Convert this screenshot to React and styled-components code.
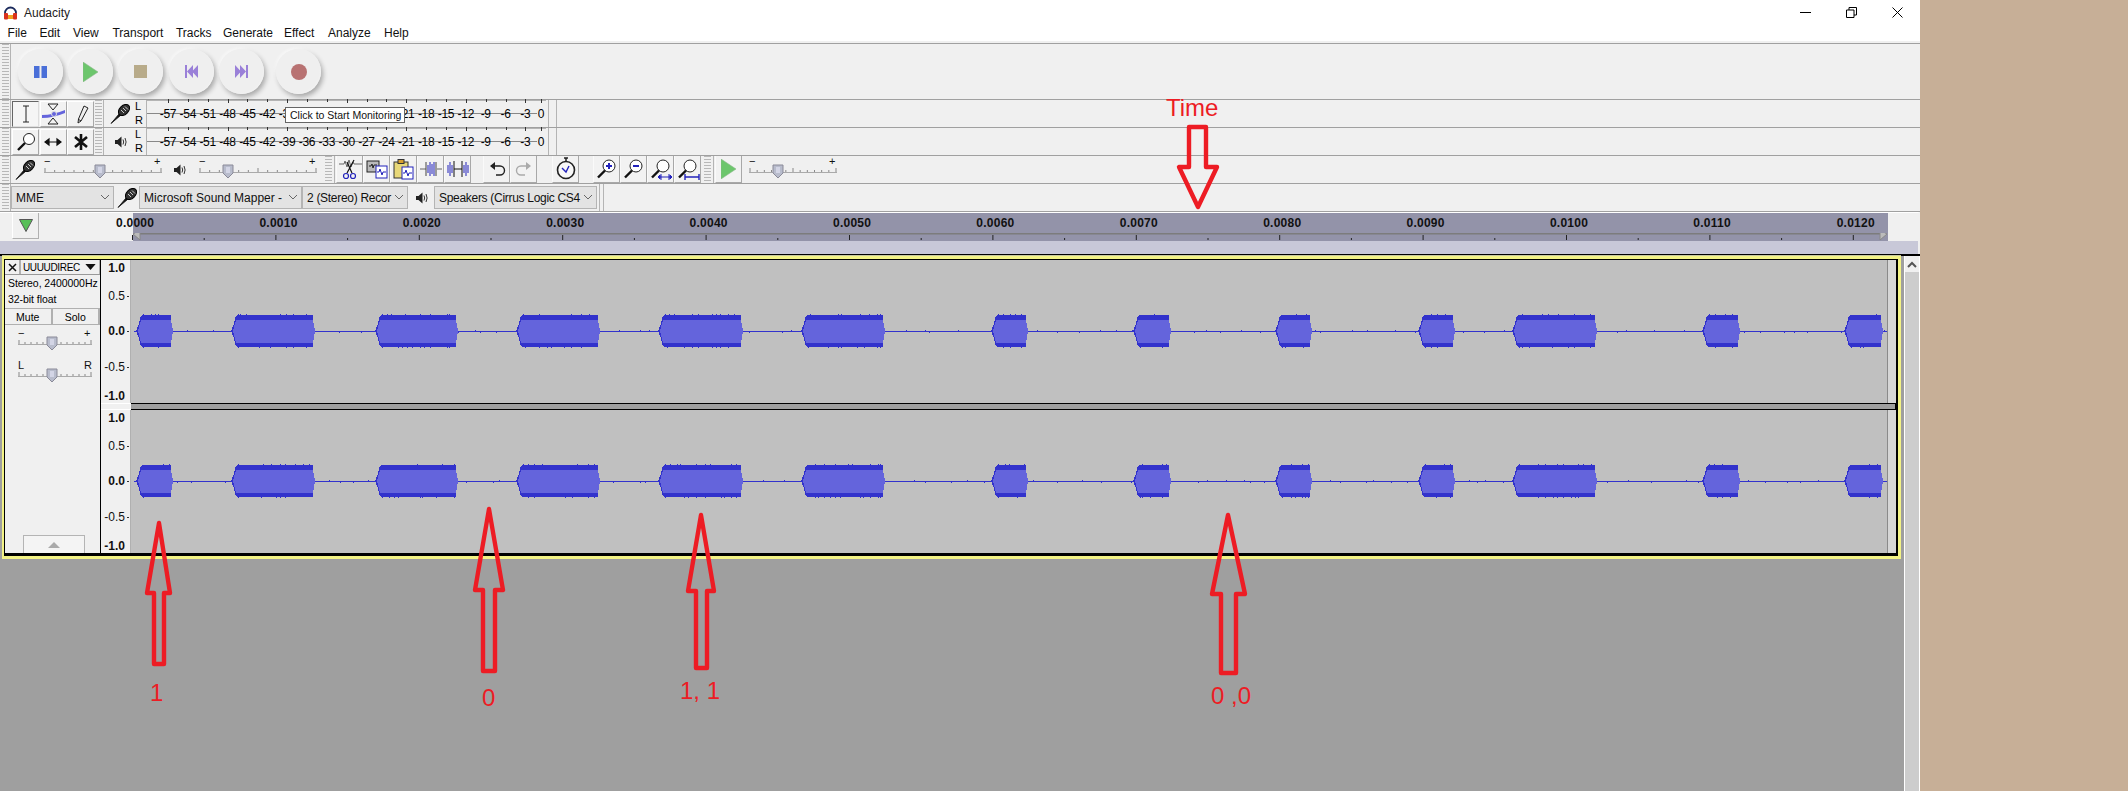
import React, { useMemo } from "react";
import styled, { createGlobalStyle } from "styled-components";

const Global = createGlobalStyle`
  html, body { margin: 0; padding: 0; background: #fff; }
  body { font-family: "Liberation Sans", Arial, sans-serif; color: #000; width: 2128px; height: 799px; overflow: hidden; }
  * { box-sizing: border-box; }
`;

const Page = styled.div`position: relative; width: 2128px; height: 799px; background: #fff;`;
const Screen = styled.div`display: flex; height: 791px;`;
const Desktop = styled.div`width: 208px; background: #c7af97;`;
const AppWindow = styled.div`width: 1920px; display: flex; flex-direction: column; background: #fff;`;

const TitleBar = styled.div`height: 25px; display: flex; align-items: center; padding-left: 3px; font-size: 12px; color: #222; flex: none;`;
const TitleText = styled.span`margin-left: 6px;`;
const WinControls = styled.div`margin-left: auto; display: flex; align-items: center;`;
const WinButton = styled.div`width: 46px; height: 25px; display: flex; align-items: center; justify-content: center;`;

const MenuBar = styled.div`height: 16px; display: flex; align-items: center; font-size: 12px; padding-left: 7.6px; color: #111; flex: none;`;
const MenuItem = styled.span`width: ${p => p.$w}px; flex: none;`;

const TopEdge = styled.div`height: 3px; background: #f0f0f0; border-bottom: 1px solid #a0a0a0; flex: none;`;
const ToolRow = styled.div`
  height: ${p => p.$h || 28}px; display: flex; align-items: stretch; background: #f0f0f0;
  border-bottom: 1px solid #a0a0a0; flex: none; position: relative;
`;
const Grip = styled.div`
  width: ${p => p.$w || 9}px; margin-left: ${p => p.$ml ?? 2}px; flex: none; border-right: 1px solid #b4b4b4;
  background: repeating-linear-gradient(to bottom, #b8b8b8 0, #b8b8b8 1px, transparent 1px, transparent 3px) 0 0 / 7px 100% no-repeat;
`;
const Slot = styled.div`display: flex; align-items: center; justify-content: center; flex: none; margin-left: ${p => p.$ml || 0}px; width: ${p => p.$w}px;`;

const TransportButtons = styled.div`display: flex; align-items: center;`;
const RoundButton = styled.div`
  width: 45px; height: 45px; border-radius: 50%; margin-left: ${p => p.$ml}px; display: flex; align-items: center; justify-content: center;
  background: radial-gradient(circle at 46% 46%, #efefef 0, #efefef 66%, #f6f6f6 82%, #e6e6e6 100%);
  box-shadow: 2px 3px 5px rgba(0,0,0,.3), -1px -1px 3px rgba(255,255,255,.8);
`;

const ToolButton = styled.div`
  width: 27px; margin: 1px 0 0 ${p => p.$ml ?? 1}px; display: flex; align-items: center; justify-content: center; flex: none;
  border-right: 1px solid #a8a8a8; border-bottom: 1px solid #a8a8a8; background: #f2f2f2;
  ${p => p.$on ? "border-left: 1px solid #666; border-top: 1px solid #666; background:#f5f5f5; border-right-color:#ddd; border-bottom-color:#ddd;" : "border-left: 1px solid #fff; border-top: 1px solid #fff;"}
`;
const LR = styled.div`width: 9px; margin-left: 4px; font-size: 11px; line-height: 13.5px; flex: none;`;
const Meter = styled.div`
  width: 400px; margin-left: 2px; flex: none; display: flex; align-items: center; padding-left: 11px; font-size: 12px;
  border: 1px solid #b4b4b4; border-right: none; border-bottom: none; letter-spacing: -.3px;
  background: linear-gradient(to bottom, transparent 12px, #888 12px, #888 13px, transparent 13px) 0 0 / 390px 100% no-repeat;
`;
const MeterCell = styled.span`
  position: relative; width: ${p => p.$w}px; text-align: center; flex: none;
  &::before { content: ""; position: absolute; top: -8px; left: 50%; width: 1px; height: ${p => p.$tall ? 4 : 3}px; background: #333; }
`;
const MeterEnd = styled.div`width: 9px; margin-left: 2px; flex: none; border-left: 1px solid #b4b4b4; border-right: 1px solid #b4b4b4;`;

const RowButton = styled.div`
  width: ${p => p.$w || 27}px; margin-left: ${p => p.$ml || 0}px; flex: none; display: flex; align-items: center; justify-content: center;
  background: #f2f2f2; border-right: 1px solid #a8a8a8; border-bottom: 1px solid #a8a8a8; border-left: 1px solid #fafafa;
`;

const Combo = styled.div`
  width: ${p => p.$w}px; margin: 2px 0 2px ${p => p.$ml || 0}px; flex: none; display: flex; align-items: center;
  background: #e3e3e3; border: 1px solid #b4b4b4; font-size: 12px; letter-spacing: ${p => p.$ls || 0}px; padding-left: 4px; color: #111;
`;
const ComboText = styled.span`flex: 1; min-width: 0; white-space: nowrap;`;
const Chevron = styled.svg`width: 15px; height: 8px; flex: none;`;
const VDivider = styled.div`width: 5px; margin-left: ${p => p.$ml}px; flex: none; border-left: 1px solid #b4b4b4; border-right: 1px solid #b4b4b4;`;

const RulerZone = styled.div`flex: none; height: 42px; border-top: 1px solid #fff; background: #c8c8d8; border-right: 2px solid #f0f0f0;`;
const RulerTop = styled.div`
  height: 28px; display: flex;
  background: linear-gradient(to right, #f0f0f0 133px, #9393a9 133px, #9393a9 1888px, #f0f0f0 1888px);
`;
const PlayMark = styled.div`
  width: 27px; height: 26px; margin-left: 12px; display: flex; align-items: center; justify-content: center;
  border-right: 1px solid #b0b0b0; border-bottom: 1px solid #b0b0b0; border-left: 1px solid #fff; flex: none;
`;
const RulerScale = styled.div`flex: 1; display: flex; flex-direction: column; min-width: 0;`;
const RulerLabels = styled.div`height: 20px; display: flex; align-items: center; padding-left: 77px; font-size: 12px; font-weight: bold; letter-spacing: .25px; color: #111;`;
const RulerLabel = styled.span`width: 143.4px; flex: none;`;

const TrackArea = styled.div`flex: 1; display: flex; background: #9f9f9f; border-top: 2px solid #000; min-height: 0;`;
const TrackWell = styled.div`width: 1904px; flex: none; padding: 0 0 0 2px;`;
const TrackFrame = styled.div`
  width: 1899px; margin-top: 0; border: 3px solid #f3f386; border-left-width: 2px;
  box-shadow: 0 -1px 0 #c8c8a0;
`;
const TrackBody = styled.div`
  height: 297px; display: flex; background: #f0f0f0; border-style: solid; border-color: #000; border-width: 1px 3px 3px 1px;
`;
const Panel = styled.div`width: 96px; flex: none; display: flex; flex-direction: column; border-right: 1px solid #000; font-size: 10.5px; height: 293px;`;
const PanelTitle = styled.div`height: 15px; display: flex; border-bottom: 1px solid #999; flex: none;`;
const CloseBox = styled.div`width: 16px; display: flex; align-items: center; justify-content: center; border-right: 2px solid #b0b0b0; flex: none;`;
const TitleDrop = styled.div`flex: 1; display: flex; align-items: center; padding-left: 2px; border-right: 1px solid #b0b0b0; font-size: 10px; letter-spacing: -.35px; white-space: nowrap;`;
const DropTriangle = styled.svg`margin-left: 5px; width: 11px; height: 6px; flex: none;`;
const InfoLine = styled.div`height: 16px; padding-left: 3px; line-height: 16px; white-space: nowrap; flex: none; letter-spacing: -.05px;`;
const MuteSolo = styled.div`height: 17px; display: flex; margin-top: 1px; flex: none; border-top: 1px solid #b0b0b0; border-bottom: 1px solid #b0b0b0;`;
const MSButton = styled.div`flex: 1; display: flex; align-items: center; justify-content: center; border-right: 2px solid #b0b0b0;`;
const SliderBlock = styled.div`width: 74px; margin: ${p => p.$mt}px 0 0 13px; flex: none;`;
const CollapseButton = styled.div`
  width: 62px; height: 18px; margin: auto 0 0 18px; border: 1px solid #b4b4b4; border-bottom: none; background: #f4f4f4;
  display: flex; align-items: center; justify-content: center;
`;

const Channels = styled.div`flex: 1; display: flex; flex-direction: column; min-width: 0; height: 293px;`;
const Channel = styled.div`height: ${p => p.$h}px; display: flex; flex: none;`;
const Sep = styled.div`height: 7px; display: flex; flex: none;`;
const SepRuler = styled.div`width: 30px; background: #f0f0f0; border-top: 1px solid #fff; border-bottom: 1px solid #fff; flex: none;`;
const SepBar = styled.div`flex: 1; background: #9f9f9f; border-top: 1px solid #000; border-bottom: 1px solid #000;`;
const VRuler = styled.div`width: 30px; flex: none; display: flex; flex-direction: column; border-right: 1px solid #b0b0b0; background: #f0f0f0;`;
const VMark = styled.div`
  height: ${p => p.$h}px; display: flex; align-items: center; justify-content: flex-end; padding-right: 5px; font-size: 12px; color: #111;
  font-weight: ${p => p.$bold ? "bold" : "normal"}; position: relative;
  ${p => p.$tick ? `&::after{content:"";position:absolute;right:1px;top:50%;width:2px;height:1px;background:#333;}` : ""}
`;
const WaveWell = styled.div`flex: 1; display: flex; min-width: 0; background: #c0c0c0;`;
const WaveMargin = styled.div`width: 9px; flex: none; background: #d6d6d6; border-left: 1px solid #8a8a8a;`;

const Scrollbar = styled.div`width: 16px; flex: none; background: #cdcdcd; border-left: 1px solid #fff; border-right: 1px solid #fff;`;
const ScrollUp = styled.div`height: 16px; background: #f0f0f0; display: flex; align-items: center; justify-content: center;`;

const Overlay = styled.svg`position: absolute; inset: 0; width: 2128px; height: 799px; pointer-events: none;`;
const Note = styled.div`position: absolute; left: ${p => p.$x}px; top: ${p => p.$y}px; font-size: 24px; line-height: 24px; color: #ed1c24; white-space: pre;`;
const Tip = styled.div`
  position: absolute; left: 285px; top: 107px; width: 120px; height: 16px; background: #fff; border: 1px solid #666; font-size: 10.5px; line-height: 14px;
  padding-left: 4px; white-space: nowrap; color: #111; z-index: 2;
`;
const SliderSvg = styled.svg`overflow: visible; flex: none;`;

/* ----- drawings ----- */
const AppIcon = () => (
  <svg width="15" height="14" viewBox="0 0 15 14">
    <path d="M2 9V7a5.5 5.5 0 0 1 11 0v2" fill="none" stroke="#1b2a5c" strokeWidth="1.8" />
    <rect x="1" y="7" width="4" height="6.5" rx="1" fill="#d8301e" /><rect x="10" y="7" width="4" height="6.5" rx="1" fill="#d8301e" />
    <rect x="5" y="9" width="5" height="4" fill="#f0a020" />
  </svg>
);
const Mic = () => (
  <svg width="21" height="21" viewBox="0 0 21 21">
    <path d="M1 20.5 L9 11 L10.5 12.5 Z" fill="#111" stroke="#111" strokeWidth=".8" />
    <ellipse cx="14" cy="7" rx="6.6" ry="4.4" transform="rotate(-45 14 7)" fill="#333" stroke="#000" />
    <path d="M11 7 l3 3 M13 5 l3 3 M15 3.5 l3 3" stroke="#ddd" strokeWidth=".9" />
  </svg>
);
const Speaker = () => (
  <svg width="14" height="14" viewBox="0 0 14 14">
    <path d="M1 5h2.5L7.5 1.5v11L3.5 9H1z" fill="#222" />
    <path d="M9 4.5q1.4 2.5 0 5M11 3q2.2 4 0 8" fill="none" stroke="#333" />
  </svg>
);
const Shield = ({ x, y }) => (
  <g>
    <path d={`M${x - 5} ${y - 6}h10v8l-5 5l-5-5z`} fill="#b8bccc" stroke="#8a8a98" />
    <path d={`M${x - 2} ${y - 3}h4M${x - 2} ${y - 1}h4M${x - 2} ${y + 1}h4`} stroke="#eef" />
  </g>
);
const Sign = styled.text`font: 11px "Liberation Sans", sans-serif; fill: #111;`;
const LabeledSlider = ({ w, t, a, b, ay = 7 }) => (
  <SliderSvg width={w} height={24} viewBox={`0 0 ${w} 24`}>
    <Sign x="0" y={ay}>{a}</Sign>
    <Sign x={w - 8} y={ay}>{b}</Sign>
    <path d={`M0 14.5H${w}`} stroke="#aaa" />
    {Array.from({ length: 13 }, (_, i) => <path key={i} d={`M${1 + (i * (w - 2)) / 12} 14v-${i % 6 === 0 ? 4 : 2}`} stroke="#888" />)}
    <Shield x={t} y={13} />
  </SliderSvg>
);

const S = ({ children, w = 22, h = 22 }) => <svg width={w} height={h} viewBox={`0 0 ${w} ${h}`}>{children}</svg>;
const IBeam = () => <S><path d="M8 3h6M8 19h6M11 3v16" stroke="#222" fill="none" /></S>;
const Envelope = () => <S w={25}><path d="M7 1h10l-5 6zM7 21h10l-5-6z" fill="none" stroke="#222" /><path d="M1 12 Q12 12 24 7 V10 Q12 15 1 15z" fill="#6464dc" /><circle cx="13" cy="11" r="2.5" fill="#6464dc" stroke="#ddd" /></S>;
const Pencil = () => <S><path d="M14 3l4 2-7 13-3 2 .5-4z" fill="#eee" stroke="#222" /><path d="M8 16l3 2" stroke="#222" /></S>;
const ZoomTool = () => <S><circle cx="14" cy="8" r="5.5" fill="#fff" stroke="#222" /><path d="M10 12 L3 19" stroke="#111" strokeWidth="2.4" /></S>;
const Shift = () => <S><path d="M3 11H19M7 8l-4 3 4 3zM15 8l4 3-4 3z" fill="#111" stroke="#111" strokeWidth="1.2" /></S>;
const Multi = () => <S><path d="M11 3V19M5 6L17 16M17 6L5 16" stroke="#111" strokeWidth="2.6" /></S>;

const Wiggle = ({ x0 = 1, x1 = 21, c = "#666", y = 6 }) => <path d={`M${x0} ${y}h5l1-3 2 6 2-7 2 7 2-5 1 2h${Math.max(x1 - x0 - 15, 1)}`} fill="none" stroke={c} />;
const Cut = () => <S w={24}><Wiggle x1={24} /><path d="M16 2L9 15M9 4l5 11" stroke="#111" strokeWidth="1.2" /><circle cx="8" cy="18" r="2.5" fill="none" stroke="#2222bb" strokeWidth="1.2" /><circle cx="15" cy="18" r="2.5" fill="none" stroke="#2222bb" strokeWidth="1.2" /></S>;
const Copy = () => <S w={24}><rect x="2" y="3" width="12" height="11" fill="#bbb" stroke="#222" /><path d="M4 8h2l1-2 1 4 1-3h3" stroke="#222" fill="none" /><rect x="11" y="8" width="11" height="12" fill="#fff" stroke="#2222bb" /><path d="M12 14h2l1-3 2 6 1-3h3" stroke="#2222bb" fill="none" /></S>;
const Paste = () => <S w={24}><rect x="2" y="4" width="14" height="16" fill="#e8d878" stroke="#333" /><rect x="6" y="1.5" width="6" height="4" fill="#d8a030" stroke="#333" /><rect x="10" y="9" width="11" height="12" fill="#fff" stroke="#2222bb" /><path d="M11 15h2l1-3 2 6 1-3h3" stroke="#2222bb" fill="none" /></S>;
const Trim = () => <S w={24}><path d="M1 11H7M18 11H23" stroke="#666" /><path d="M9 7v8M11 4v14M13 6v10M15 4v14" stroke="#2222bb" strokeWidth="1" /><path d="M7 4v14M17 4v14" stroke="#444" /></S>;
const Silence = () => <S w={24}><path d="M2 7v8M4 4v14M6 7v8M18 7v8M20 4v14M22 7v8" stroke="#2222bb" /><path d="M8 3v16M16 3v16M8 11h8" stroke="#111" strokeWidth="1" /></S>;
const Undo = ({ c = "#222", flip }) => <S><g transform={flip ? "translate(22 0) scale(-1 1)" : ""}><path d="M5 8 H14 A4.5 4.5 0 0 1 14 17 H10" fill="none" stroke={c} strokeWidth="1.4" /><path d="M9 4 L4 8 L9 12z" fill={c} /></g></S>;
const Timer = () => <S w={24} h={24}><path d="M10 1h4M12 1v4" stroke="#222" strokeWidth="1.5" /><circle cx="12" cy="13" r="8.5" fill="#f8f8f8" stroke="#222" strokeWidth="1.6" /><path d="M8 11l4 4 3-6" stroke="#2222bb" strokeWidth="1.4" fill="none" /></S>;
const ZoomBase = ({ children }) => <S w={24}><circle cx="14" cy="8" r="6" fill="#fff" stroke="#222" /><path d="M10 12.5 L3 19.5" stroke="#111" strokeWidth="2.4" />{children}</S>;
const ZoomIn = () => <ZoomBase><path d="M11 8h6M14 5v6" stroke="#2222bb" strokeWidth="2" /></ZoomBase>;
const ZoomOut = () => <ZoomBase><path d="M11 8h6" stroke="#2222bb" strokeWidth="2" /></ZoomBase>;
const ZoomSel = () => <ZoomBase><path d="M9 19h14M12 16v6M20 16v6M9 19l2-2v4zM23 19l-2-2v4z" stroke="#2222bb" fill="#2222bb" /></ZoomBase>;
const ZoomFit = () => <ZoomBase><path d="M9 19h14M9 16v6M23 16v6" stroke="#2222bb" strokeWidth="1.4" /></ZoomBase>;
const GreenPlay = ({ w = 15, h = 20 }) => <svg width={w} height={h} viewBox="0 0 15 20"><path d="M0 0L15 10L0 20z" fill="#6cc66c" stroke="#8ab88a" strokeWidth=".6" /></svg>;

const rng = seed => () => (seed = (seed * 16807) % 2147483647) / 2147483647;
const BLOBS = [[136,173],[231,315],[375,458],[516,600],[658,743],[801,885],[991,1028],[1133,1171],[1275,1312],[1418,1455],[1512,1597],[1702,1740],[1844,1883]];
const Wave = ({ seed, h }) => {
  const { outer, inner, noise } = useMemo(() => {
    const r = rng(seed);
    let outer = "", inner = "", noise = "";
    const c = 71;
    for (let x = 6; x < 1754; x += 5 + Math.floor(r() * 30)) noise += `M${x} ${c + (r() < .5 ? -1 : 1)}h${r() < .2 ? 2 : 1}v1h-1z`;
    BLOBS.forEach(([a0, b0]) => {
      const a = a0 - 131, b = b0 - 131;
      outer += `M${a} ${c}L${a + 3} ${c - 7}L${a + 4} ${c - 13}L${a + 6} ${c - 16}H${b - 2}V${c - 6}L${b} ${c}L${b - 2} ${c + 6}V${c + 16}H${a + 6}L${a + 4} ${c + 13}L${a + 3} ${c + 7}Z`;
      inner += `M${a + 2} ${c}L${a + 5} ${c - 11}H${b - 2}L${b} ${c}L${b - 2} ${c + 12}H${a + 5}Z`;
      for (let x = a + 7; x < b - 3; x += 2 + Math.floor(r() * 7)) {
        if (r() < .5) noise += `M${x} ${c - 17}h1v1h-1z`;
        if (r() < .5) noise += `M${x} ${c + 16}h1v1h-1z`;
      }
    });
    return { outer, inner, noise };
  }, [seed]);
  return (
    <svg width="1756" height={h} viewBox={`0 0 1756 ${h}`} shapeRendering="crispEdges" style={{ flex: "none" }}>
      <path d="M3 71H1756" stroke="#3232cc" />
      <path d={noise} fill="#3232cc" />
      <path d={outer} fill="#3232cc" />
      <path d={inner} fill="#6464dc" />
    </svg>
  );
};

const METER = ["-57","-54","-51","-48","-45","-42","-39","-36","-33","-30","-27","-24","-21","-18","-15","-12","-9","-6","-3"];
const MeterBar = () => (
  <Meter>
    {METER.map((m, i) => <MeterCell key={m} $w={19.86} $tall={i % 3 === 0}>{m}</MeterCell>)}
    <MeterCell $w={11.4} $tall>0</MeterCell>
  </Meter>
);
const MENU = [["File", 31.8], ["Edit", 33.6], ["View", 39.5], ["Transport", 63.5], ["Tracks", 47], ["Generate", 61], ["Effect", 44], ["Analyze", 56], ["Help", 40]];
const RULER = ["0.0000","0.0010","0.0020","0.0030","0.0040","0.0050","0.0060","0.0070","0.0080","0.0090","0.0100","0.0110","0.0120"];
const VMARKS = [["1.0",16,true,false],["0.5",40,false,true],["0.0",30,true,true],["-0.5",42,false,true],["-1.0",15,true,false]];

const VScale = () => (
  <VRuler>
    {VMARKS.map(([t, h, b, k]) => <VMark key={t} $h={h} $bold={b} $tick={k}>{t}</VMark>)}
  </VRuler>
);

const RulerTicks = () => {
  const ticks = [];
  for (let k = 0; k <= 24; k++) {
    const x = 132.5 + 71.7 * k - 39;
    if (x < 1852) ticks.push(<path key={k} d={`M${x} ${k % 2 ? 5 : 2}v${k % 2 ? 2 : 5}`} stroke="#222" />);
  }
  return (
    <svg width="1850" height="8" viewBox="0 0 1850 8" style={{ flex: "none" }}>
      <path d="M99 .5H1841" stroke="#7c7c7c" strokeWidth="2" />
      <path d="M1841 -3l7 4-7 6z" fill="#bbb" stroke="#888" />
      <path d="M101 -3l-7 4 7 6z" fill="#bbb" stroke="#888" />
      {ticks}
    </svg>
  );
};

const ToolsRow = ({ icons, on, speaker }) => (
  <ToolRow>
    <Grip />
    {icons.map((I, i) => <ToolButton key={i} $on={on === i} $ml={i === 0 ? 1 : 0.5}><I /></ToolButton>)}
    <Grip $ml={1} />
    <Slot $ml={6} $w={21}>{speaker ? <Speaker /> : <Mic />}</Slot>
    <LR>L<br />R</LR>
    <MeterBar />
    <MeterEnd />
  </ToolRow>
);
const ChevronIcon = () => <Chevron viewBox="0 0 15 8"><path d="M3 1l4 4 4-4" fill="none" stroke="#666" /></Chevron>;

export default function App() {
  return (
    <Page>
      <Global />
      <Screen>
        <AppWindow>
          <TitleBar>
            <AppIcon />
            <TitleText>Audacity</TitleText>
            <WinControls>
              <WinButton><svg width="11" height="11"><path d="M0 5.5H11" stroke="#000" /></svg></WinButton>
              <WinButton><svg width="11" height="11"><path d="M.5 3h7.5v7.5H.5zM3 3V.5h7.5V8H8" fill="none" stroke="#000" /></svg></WinButton>
              <WinButton><svg width="11" height="11"><path d="M.5.5l10 10M10.5.5l-10 10" stroke="#000" /></svg></WinButton>
            </WinControls>
          </TitleBar>
          <MenuBar>
            {MENU.map(([m, w]) => <MenuItem key={m} $w={w}>{m}</MenuItem>)}
          </MenuBar>
          <TopEdge />
          <ToolRow $h={56}>
            <Grip />
            <TransportButtons>
              <RoundButton $ml={7}><svg width="13" height="12"><path d="M0 0h5.5v12H0zM7.5 0H13v12H7.5z" fill="#4a6fd8" /></svg></RoundButton>
              <RoundButton $ml={5}><GreenPlay /></RoundButton>
              <RoundButton $ml={5}><svg width="13" height="13"><rect width="13" height="13" fill="#b8ab8a" /></svg></RoundButton>
              <RoundButton $ml={6}><svg width="13" height="13"><path d="M0 0h2v13H0zM2 6.5L8 0v13zM7 6.5L13 0v13z" fill="#9a80d8" /></svg></RoundButton>
              <RoundButton $ml={5}><svg width="13" height="13"><path d="M13 0h-2v13h2zM11 6.5L5 0v13zM6 6.5L0 0v13z" fill="#9a80d8" /></svg></RoundButton>
              <RoundButton $ml={12}><svg width="16" height="16"><circle cx="8" cy="8" r="8" fill="#b87272" /></svg></RoundButton>
            </TransportButtons>
          </ToolRow>
          <ToolsRow icons={[IBeam, Envelope, Pencil]} on={0} />
          <ToolsRow icons={[ZoomTool, Shift, Multi]} speaker />
          <ToolRow>
            <Grip />
            <Slot $ml={4} $w={21}><Mic /></Slot>
            <Slot $ml={8} $w={118}><LabeledSlider w={118} t={56} a="−" b="+" /></Slot>
            <Slot $ml={11} $w={14}><Speaker /></Slot>
            <Slot $ml={12} $w={118}><LabeledSlider w={118} t={29} a="−" b="+" /></Slot>
            <Grip $ml={8} $w={10} />
            {[Cut, Copy, Paste, Trim, Silence].map((I, i) => <RowButton key={i} $ml={i === 0 ? 1 : 0}><I /></RowButton>)}
            <RowButton $ml={12}><Undo /></RowButton>
            <RowButton><Undo c="#aaa" flip /></RowButton>
            <RowButton $ml={15}><Timer /></RowButton>
            <RowButton $ml={14}><ZoomIn /></RowButton>
            <RowButton><ZoomOut /></RowButton>
            <RowButton><ZoomSel /></RowButton>
            <RowButton><ZoomFit /></RowButton>
            <Grip $ml={3} $w={10} />
            <RowButton $ml={1}><GreenPlay /></RowButton>
            <Slot $ml={7} $w={88}><LabeledSlider w={88} t={29} a="−" b="+" /></Slot>
          </ToolRow>
          <ToolRow>
            <Grip />
            <Combo $w={103}><ComboText>MME</ComboText><ChevronIcon /></Combo>
            <Slot $ml={3} $w={21}><Mic /></Slot>
            <Combo $w={163} $ml={1}><ComboText>Microsoft Sound Mapper -</ComboText><ChevronIcon /></Combo>
            <Combo $w={106} $ls={-0.3}><ComboText>2 (Stereo) Recor</ComboText><ChevronIcon /></Combo>
            <Slot $ml={7} $w={14}><Speaker /></Slot>
            <Combo $w={163} $ml={5} $ls={-0.3}><ComboText>Speakers (Cirrus Logic CS4</ComboText><ChevronIcon /></Combo>
            <VDivider $ml={2} />
          </ToolRow>
          <RulerZone>
            <RulerTop>
              <PlayMark><svg width="14" height="13"><path d="M.5.5h13L7 12.5z" fill="#58c058" stroke="#555" /></svg></PlayMark>
              <RulerScale>
                <RulerLabels>{RULER.map(r => <RulerLabel key={r}>{r}</RulerLabel>)}</RulerLabels>
                <RulerTicks />
              </RulerScale>
            </RulerTop>
          </RulerZone>
          <TrackArea>
            <TrackWell>
              <TrackFrame>
                <TrackBody>
                  <Panel>
                    <PanelTitle>
                      <CloseBox><svg width="9" height="9"><path d="M1 1l7 7M8 1L1 8" stroke="#111" strokeWidth="1.5" /></svg></CloseBox>
                      <TitleDrop>UUUUDIREC<DropTriangle viewBox="0 0 12 7"><path d="M0 0h12L6 7z" fill="#111" /></DropTriangle></TitleDrop>
                    </PanelTitle>
                    <InfoLine>Stereo, 2400000Hz</InfoLine>
                    <InfoLine>32-bit float</InfoLine>
                    <MuteSolo><MSButton>Mute</MSButton><MSButton>Solo</MSButton></MuteSolo>
                    <SliderBlock $mt={5}><LabeledSlider w={74} t={34} a="−" b="+" /></SliderBlock>
                    <SliderBlock $mt={6}><LabeledSlider w={74} t={34} a="L" b="R" /></SliderBlock>
                    <CollapseButton><svg width="12" height="6"><path d="M0 6L6 0l6 6z" fill="#aaa" /></svg></CollapseButton>
                  </Panel>
                  <Channels>
                    <Channel $h={143}>
                      <VScale />
                      <WaveWell><Wave seed={11} h={143} /><WaveMargin /></WaveWell>
                    </Channel>
                    <Sep><SepRuler /><SepBar /></Sep>
                    <Channel $h={143}>
                      <VScale />
                      <WaveWell><Wave seed={77} h={143} /><WaveMargin /></WaveWell>
                    </Channel>
                  </Channels>
                </TrackBody>
              </TrackFrame>
            </TrackWell>
            <Scrollbar>
              <ScrollUp><svg width="10" height="7"><path d="M1 6l4-4 4 4" fill="none" stroke="#555" strokeWidth="2" /></svg></ScrollUp>
            </Scrollbar>
          </TrackArea>
        </AppWindow>
        <Desktop />
      </Screen>

      <Tip>Click to Start Monitoring</Tip>

      <Overlay viewBox="0 0 2128 799">
        <g fill="none" stroke="#ed1c24" strokeWidth="4.4" strokeLinejoin="round">
          <path d="M1189 127H1206V167H1217L1198 207L1179 167H1189Z" />
          <path d="M159 523L170 593H164V664H154V593H147Z" />
          <path d="M489 509L503 590H495V671H483V590H475Z" />
          <path d="M701 515L714 591H707V668H696V591H688Z" />
          <path d="M1228 515L1245 594H1236V673H1221V594H1212Z" />
        </g>
      </Overlay>
      <Note $x={1166} $y={96}>Time</Note>
      <Note $x={150} $y={681}>1</Note>
      <Note $x={482} $y={686}>0</Note>
      <Note $x={680} $y={679}>1, 1</Note>
      <Note $x={1211} $y={684}>0 ,0</Note>
    </Page>
  );
}
